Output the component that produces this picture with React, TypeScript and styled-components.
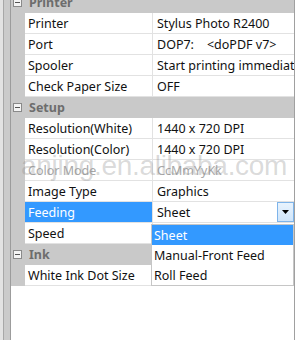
import React from "react"
import styled, { createGlobalStyle } from "styled-components"

const GlobalStyle = createGlobalStyle`
  html, body {
    margin: 0;
    padding: 0;
    background: #ffffff;
  }
  body {
    font-family: "Noto Sans", "Liberation Sans", Arial, sans-serif;
  }
`

const Window = styled.div`
  position: relative;
  width: 295px;
  height: 340px;
  overflow: hidden;
  display: flex;
  background: #ffffff;
`

const SideStrip = styled.div`
  width: 3px;
  background: #e3e3e3;
  border-right: 1px solid #a8a8a8;
  flex: none;
`

const SideBar = styled.div`
  width: 6px;
  background: #cbcbcb;
  border-right: 1px solid #9c9c9c;
  flex: none;
`

const Grid = styled.div`
  position: relative;
  flex: 1;
  display: flex;
  flex-direction: column;
  margin-top: -8px;
  border-right: 1px solid #a0a0a0;
`

const Header = styled.div`
  height: 21px;
  display: flex;
  align-items: center;
  background: #c9c9c9;
  flex: none;
`

const MinusBox = styled.span`
  width: 7px;
  height: 7px;
  margin-left: 2px;
  margin-right: 7px;
  border: 1px solid #8a8a8a;
  background: #f4f4f4;
  display: flex;
  align-items: center;
  justify-content: center;
  flex: none;

  &::after {
    content: "";
    width: 5px;
    height: 1px;
    background: #555555;
  }
`

const HeaderText = styled.span`
  font-size: 12.5px;
  font-weight: bold;
  color: #6d6d6d;
`

const Row = styled.div`
  height: 21px;
  display: grid;
  grid-template-columns: 14px 127px 1px 1fr;
  flex: none;
`

const Gutter = styled.div`
  background: #c9c9c9;
`

const NameCell = styled.div<{ $selected?: boolean; $disabled?: boolean }>`
  display: flex;
  align-items: center;
  padding-left: 3px;
  font-size: 12.5px;
  white-space: nowrap;
  overflow: hidden;
  border-bottom: 1px solid #e2e2e2;
  background: ${(p) => (p.$selected ? "#3399ff" : "#ffffff")};
  color: ${(p) => (p.$selected ? "#ffffff" : p.$disabled ? "#a8a8a8" : "#111111")};
`

const Divider = styled.div`
  background: #e2e2e2;
`

const ValueCell = styled.div<{ $disabled?: boolean }>`
  display: flex;
  align-items: center;
  padding-left: 4px;
  font-size: 12.5px;
  white-space: pre;
  overflow: hidden;
  border-bottom: 1px solid #e2e2e2;
  color: ${(p) => (p.$disabled ? "#a8a8a8" : "#111111")};
`

const ComboCell = styled.div`
  display: flex;
  align-items: stretch;
  font-size: 12.5px;
  color: #111111;
  border-bottom: 1px solid #e2e2e2;
`

const ComboText = styled.span`
  flex: 1;
  display: flex;
  align-items: center;
  padding-left: 4px;
`

const ComboButton = styled.span`
  width: 15px;
  border: 1px solid #7eb4ea;
  background: linear-gradient(#e8f3fd, #cfe5fa);
  display: flex;
  align-items: center;
  justify-content: center;
`

const DropList = styled.div`
  position: absolute;
  left: 140px;
  top: 232px;
  width: 141px;
  border: 1px solid #c6c6c6;
  background: #ffffff;
  display: flex;
  flex-direction: column;
  z-index: 2;
`

const DropItem = styled.div<{ $active?: boolean }>`
  height: 20px;
  display: flex;
  align-items: center;
  padding-left: 2px;
  font-size: 12.5px;
  background: ${(p) => (p.$active ? "#3399ff" : "#ffffff")};
  color: ${(p) => (p.$active ? "#ffffff" : "#111111")};
`

const Watermark = styled.div`
  position: absolute;
  left: 21px;
  top: 150px;
  font-family: "Liberation Sans", Arial, sans-serif;
  font-size: 28px;
  letter-spacing: -0.3px;
  color: rgba(140, 140, 140, 0.32);
  white-space: nowrap;
  pointer-events: none;
  z-index: 3;
`

type Prop = { name: string; value?: string; disabled?: boolean; combo?: boolean }
type Section = { title: string; props: Prop[] }

const sections: Section[] = [
  {
    title: "Printer",
    props: [
      { name: "Printer", value: "Stylus Photo R2400" },
      { name: "Port", value: "DOP7:    <doPDF v7>" },
      { name: "Spooler", value: "Start printing immediately" },
      { name: "Check Paper Size", value: "OFF" },
    ],
  },
  {
    title: "Setup",
    props: [
      { name: "Resolution(White)", value: "1440 x 720 DPI" },
      { name: "Resolution(Color)", value: "1440 x 720 DPI" },
      { name: "Color Mode", value: "CcMmYyKk", disabled: true },
      { name: "Image Type", value: "Graphics" },
      { name: "Feeding", value: "Sheet", combo: true },
      { name: "Speed", value: "" },
    ],
  },
  {
    title: "Ink",
    props: [{ name: "White Ink Dot Size", value: "" }],
  },
]

const feedOptions = ["Sheet", "Manual-Front Feed", "Roll Feed"]

export default function App() {
  return (
    <>
      <GlobalStyle />
      <Window>
        <SideStrip />
        <SideBar />
        <Grid>
          {sections.map((s) => (
            <React.Fragment key={s.title}>
              <Header>
                <MinusBox />
                <HeaderText>{s.title}</HeaderText>
              </Header>
              {s.props.map((p) => (
                <Row key={p.name}>
                  <Gutter />
                  <NameCell $selected={p.combo} $disabled={p.disabled}>
                    {p.name}
                  </NameCell>
                  <Divider />
                  {p.combo ? (
                    <ComboCell>
                      <ComboText>{p.value}</ComboText>
                      <ComboButton>
                        <svg width="7" height="4" viewBox="0 0 7 4">
                          <path d="M0 0 H7 L3.5 4 Z" fill="#000" />
                        </svg>
                      </ComboButton>
                    </ComboCell>
                  ) : (
                    <ValueCell $disabled={p.disabled}>{p.value}</ValueCell>
                  )}
                </Row>
              ))}
            </React.Fragment>
          ))}
          <DropList>
            {feedOptions.map((o, i) => (
              <DropItem key={o} $active={i === 0}>
                {o}
              </DropItem>
            ))}
          </DropList>
        </Grid>
        <Watermark>anjing.en.alibaba.com</Watermark>
      </Window>
    </>
  )
}
